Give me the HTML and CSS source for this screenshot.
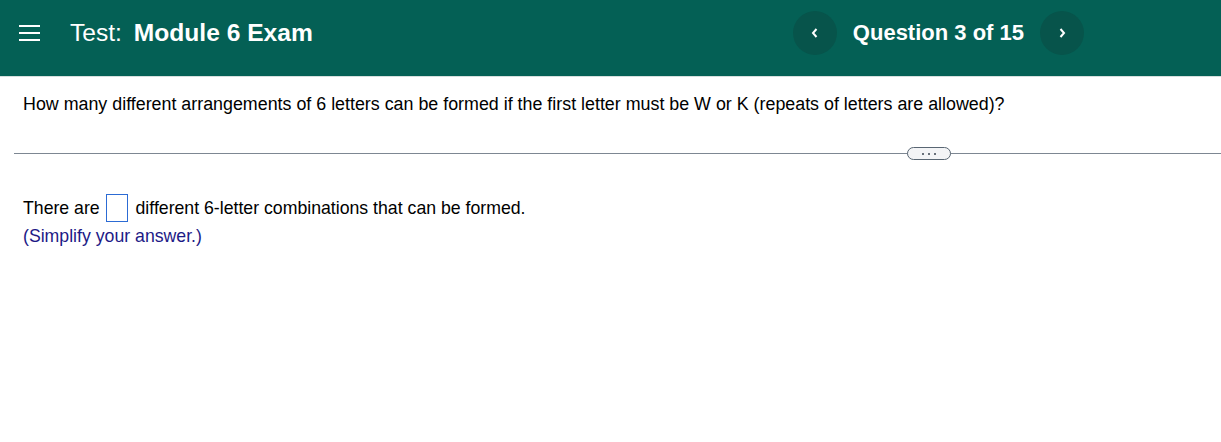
FILE: index.html
```html
<!DOCTYPE html>
<html>
<head>
<meta charset="utf-8">
<link rel="stylesheet" href="styles.css">
</head>
<body>
<header class="topbar">
  <div class="left">
    <svg class="menu" width="22" height="18" viewBox="0 0 22 18"><rect x="0" y="1" width="21" height="2" fill="#fff"/><rect x="0" y="8" width="21" height="2" fill="#fff"/><rect x="0" y="15" width="21" height="2" fill="#fff"/></svg>
    <h1 class="title"><span class="label">Test:</span> <b>Module 6 Exam</b></h1>
  </div>
  <nav class="qnav">
    <button class="navbtn"><svg width="10" height="12" viewBox="0 0 10 12"><path d="M6.5 2 L3 6 L6.5 10" fill="none" stroke="#fff" stroke-width="2"/></svg></button>
    <span class="qcount">Question 3 of 15</span>
    <button class="navbtn"><svg width="10" height="12" viewBox="0 0 10 12"><path d="M3.5 2 L7 6 L3.5 10" fill="none" stroke="#fff" stroke-width="2"/></svg></button>
  </nav>
</header>
<main>
  <p class="question">How many different arrangements of 6 letters can be formed if the first letter must be W or K (repeats of letters are allowed)?</p>
  <div class="divider"><span class="pill"><i></i><i></i><i></i></span></div>
  <div class="answer">
    <p class="line">There are <span class="box"></span> different 6-letter combinations that can be formed.</p>
    <p class="hint">(Simplify your answer.)</p>
  </div>
</main>
</body>
</html>
```
FILE: styles.css
```css
html, body { margin: 0; padding: 0; background: #fff; }
body { font-family: "Liberation Sans", Arial, sans-serif; color: #000; }
.topbar {
  height: 66px;
  padding-bottom: 10px;
  background: #046055;
  border-bottom: 1px solid #d6dfdd;
  display: flex;
  align-items: center;
  justify-content: space-between;
  color: #fff;
}
.left { display: flex; align-items: center; }
.menu { margin-left: 19px; margin-right: 29px; }
.title { margin: 0; font-size: 24.6px; font-weight: normal; }
.title .label { margin-right: 5px; }
.title b { font-weight: bold; }
.qnav { display: flex; align-items: center; margin-right: 137px; }
.navbtn {
  width: 44px; height: 44px; border-radius: 50%; border: none;
  background: #07544b; display: flex; align-items: center; justify-content: center; padding: 0;
}
.qcount { font-size: 22px; font-weight: bold; margin: 0 16px; }
.question { margin: 17px 0 0 23px; font-size: 17.85px; line-height: 20px; }
.divider {
  margin: 39px 0 0 14px;
  height: 1px; background: #7d8792;
  position: relative;
}
.pill {
  position: absolute; left: 893px; top: -6px;
  width: 42px; height: 11px; border: 1px solid #596673; border-radius: 7px;
  background: #f3f4f6; display: flex; align-items: center; justify-content: center; gap: 4px;
}
.pill i { width: 2px; height: 2px; background: #3a4450; border-radius: 50%; display: block; }
.answer { margin: 40px 0 0 23px; font-size: 17.7px; }
.line { margin: 0; line-height: 28px; display: flex; align-items: center; white-space: pre; }
.box {
  display: inline-block; width: 20px; height: 26px; border: 1px solid #2c6bd4;
  margin: 0 3px 0 1px;
}
.hint { margin: 0; line-height: 28px; color: #1d1a86; }
```
